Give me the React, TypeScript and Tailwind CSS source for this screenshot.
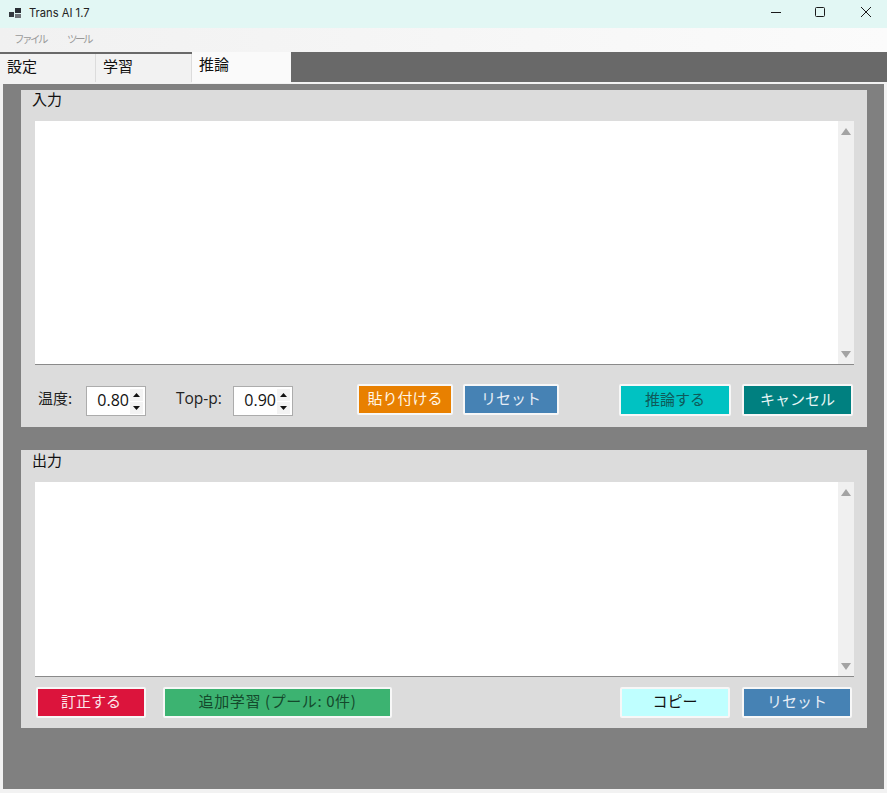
import React from "react";

const FONT = "font-['Noto_Sans_CJK_JP','Open_Sans',sans-serif]";

function TextBox({ h }: { h: string }) {
  return (
    <div className={`ml-[14px] mr-[13px] flex ${h} justify-end border-b border-[#8a8a8a] bg-white`}>
      <div className="flex w-4 flex-col items-center justify-between bg-[#f0f0f0] pb-[6px] pr-[1px] pt-[7px]">
        <svg width="10" height="7" viewBox="0 0 10 7"><path d="M5 0L10 7H0z" fill="#a3a3a3" /></svg>
        <svg width="10" height="7" viewBox="0 0 10 7"><path d="M0 0h10L5 7z" fill="#a3a3a3" /></svg>
      </div>
    </div>
  );
}

function Spin({ value }: { value: string }) {
  return (
    <div className="flex h-[30px] w-[60px] shrink-0 items-center border border-[#acacac] bg-white pr-[2px]">
      <span className="flex-1 pb-[3px] pr-[1px] text-right font-['Open_Sans',sans-serif] text-[16px] leading-none text-[#111]">{value}</span>
      <div className="flex w-[13px] flex-col gap-[1px]">
        <div className="flex h-[12px] items-center justify-center bg-[#f3f3f3]">
          <svg width="7" height="4" viewBox="0 0 7 4"><path d="M3.5 0L7 4H0z" fill="#111" /></svg>
        </div>
        <div className="flex h-[12px] items-center justify-center bg-[#f3f3f3]">
          <svg width="7" height="4" viewBox="0 0 7 4"><path d="M0 0h7L3.5 4z" fill="#111" /></svg>
        </div>
      </div>
    </div>
  );
}

function Btn({ label, cls }: { label: string; cls: string }) {
  return (
    <button className={`flex shrink-0 items-center justify-center rounded-[2px] border-[2px] border-[#f7f7f7] pb-[4px] text-[15px] leading-none ${cls}`}>
      {label}
    </button>
  );
}

export default function App() {
  return (
    <div className={`flex h-[793px] w-[887px] flex-col overflow-hidden bg-[#f2f2f2] ${FONT}`}>
      {/* title bar */}
      <div className="flex h-[28px] items-center bg-[#e2f7f4] pl-[9px]">
        <svg width="13" height="11" viewBox="0 0 13 11" className="mb-[2px] mr-[7px]">
          <rect x="0" y="4" width="5" height="5" fill="#33393f" />
          <rect x="6" y="0" width="6" height="5" fill="#2b3036" />
          <rect x="6" y="6" width="6" height="4" fill="#6f7479" />
        </svg>
        <span className="mb-[1px] font-['Inter',sans-serif] text-[11.2px] text-[#222]">Trans AI 1.7</span>
        <div className="mb-[4px] ml-auto flex items-center pr-[15px]">
          <svg width="12" height="12" viewBox="0 0 12 12" className="mr-[32px]"><path d="M1 6.5h10" stroke="#1a1a1a" strokeWidth="1" /></svg>
          <svg width="12" height="12" viewBox="0 0 12 12" className="mr-[34px]"><rect x="1.5" y="1.5" width="9" height="9" rx="1" fill="none" stroke="#1a1a1a" strokeWidth="1" /></svg>
          <svg width="12" height="12" viewBox="0 0 12 12"><path d="M1 1l10 10M11 1L1 11" stroke="#1a1a1a" strokeWidth="1" /></svg>
        </div>
      </div>
      {/* menu */}
      <div className="flex h-[24px] items-center gap-[21px] bg-gradient-to-r from-[#f1f1f1] to-[#fbfbfb] pb-[2px] pl-[14px] text-[10.5px] tracking-[-2.5px] text-[#999]">
        <span>ファイル</span>
        <span>ツール</span>
      </div>
      {/* tabs */}
      <div className="flex h-[30px] items-stretch bg-[#696969] text-[15px] text-[#111]">
        <div className="mt-[2px] flex w-[96px] items-center border-r border-[#dcdcdc] bg-[#f2f2f2] pb-[4px] pl-[7px]">設定</div>
        <div className="mt-[2px] flex w-[96px] items-center border-r border-[#dcdcdc] bg-[#f2f2f2] pb-[4px] pl-[7px]">学習</div>
        <div className="z-10 flex h-[31px] w-[99px] items-center bg-[#fafafa] pb-[6px] pl-[7px]">推論</div>
      </div>
      {/* content */}
      <div className="mx-[3px] mb-[4px] mt-[2px] flex flex-1 flex-col gap-[23px] bg-[#808080] px-[18px] pt-[6px]">
        <section className="flex h-[337px] w-[846px] flex-col bg-[#dcdcdc]">
          <div className="flex h-[31px] items-center pb-[12px] pl-[11px] text-[15px] text-[#111]">入力</div>
          <TextBox h="h-[244px]" />
          <div className="flex h-[62px] items-start pl-[17px] pt-[21px] text-[15px] text-[#222]">
            <span className="mr-[13px] mt-[1px] w-[35px] shrink-0 whitespace-nowrap">温度:</span>
            <Spin value="0.80" />
            <span className="ml-[30px] mr-[10px] mt-[1px] w-[47px] shrink-0 whitespace-nowrap font-['Open_Sans',sans-serif] text-[15.5px]">Top-p:</span>
            <Spin value="0.90" />
            <Btn label="貼り付ける" cls="-mt-[2px] ml-[64px] h-[31px] w-[96px] bg-[#e88000] text-[#fff6e6]" />
            <Btn label="リセット" cls="-mt-[2px] ml-[10px] h-[31px] w-[96px] bg-[#4682b4] text-[#e6eef6]" />
            <Btn label="推論する" cls="-mt-[2px] ml-[60px] h-[32px] w-[112px] bg-[#00c2c2] text-[#0e5a5a]" />
            <Btn label="キャンセル" cls="-mt-[2px] ml-[11px] h-[32px] w-[111px] bg-[#008080] text-[#e6f5f5]" />
          </div>
        </section>
        <section className="flex h-[278px] w-[846px] flex-col bg-[#dcdcdc]">
          <div className="flex h-[32px] items-center pb-[12px] pl-[11px] text-[15px] text-[#111]">出力</div>
          <TextBox h="h-[195px]" />
          <div className="flex items-start pl-[15px] pr-[15px] pt-[10px]">
            <Btn label="訂正する" cls="h-[31px] w-[110px] bg-[#dc143c] text-[#fbe4e9]" />
            <Btn label="追加学習 (プール: 0件)" cls="ml-[17px] h-[31px] w-[229px] bg-[#3cb371] tracking-[0.6px] text-[#14492c]" />
            <Btn label="コピー" cls="ml-auto h-[31px] w-[110px] bg-[#bfffff] text-[#111]" />
            <Btn label="リセット" cls="ml-[12px] h-[31px] w-[110px] bg-[#4682b4] text-[#e6eef6]" />
          </div>
        </section>
      </div>
    </div>
  );
}
